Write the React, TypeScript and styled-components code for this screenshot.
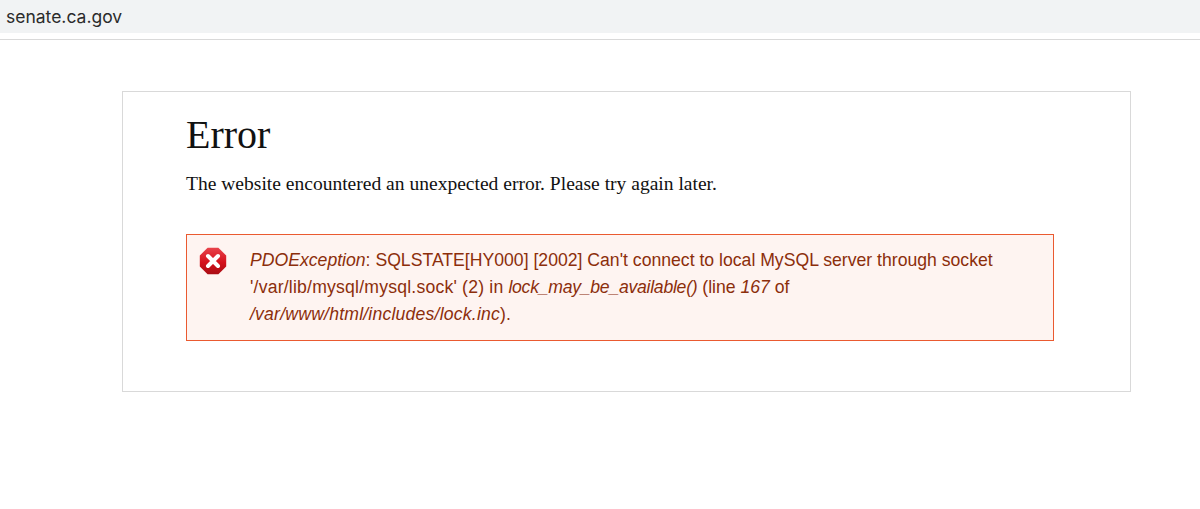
import styled, { createGlobalStyle } from 'styled-components';

const GlobalStyle = createGlobalStyle`
  html, body {
    margin: 0;
    padding: 0;
    background: #fff;
  }
`;

export default function App() {
  return (
    <>
      <GlobalStyle />
      <Page>
        <AddressBar>
          <AddressText>senate.ca.gov</AddressText>
        </AddressBar>
        <BarRule />
        <Main>
          <Card>
            <Title>Error</Title>
            <Lead>The website encountered an unexpected error. Please try again later.</Lead>
            <Alert>
              <AlertIcon viewBox="0 0 28 28" aria-hidden="true">
                <defs>
                  <linearGradient id="stopFill" x1="0" y1="0" x2="0" y2="1">
                    <stop offset="0" stopColor="#e8434b" />
                    <stop offset="0.55" stopColor="#d5111c" />
                    <stop offset="1" stopColor="#a90d14" />
                  </linearGradient>
                </defs>
                <path
                  d="M8.6 0.8h10.8l7.8 7.8v10.8l-7.8 7.8H8.6l-7.8-7.8V8.6z"
                  fill="url(#stopFill)"
                />
                <path
                  d="M9 9l10 10M19 9L9 19"
                  stroke="#fff"
                  strokeWidth="4"
                  strokeLinecap="round"
                  fill="none"
                />
              </AlertIcon>
              <AlertText>
                <em>PDOException</em>: SQLSTATE[HY000] [2002] Can't connect to local MySQL server through socket
                <br />
                <PathText>'/var/lib/mysql/mysql.sock' (2) in</PathText> <FunctionName>lock_may_be_available()</FunctionName> (line <em>167</em> of
                <br />
                <PathText as="em">/var/www/html/includes/lock.inc</PathText>).
              </AlertText>
            </Alert>
          </Card>
        </Main>
      </Page>
    </>
  );
}

const Page = styled.div`
  width: 1200px;
  height: 509px;
  overflow: hidden;
  background: #fff;
`;

const AddressBar = styled.div`
  height: 33px;
  background: #f1f3f4;
  display: flex;
  align-items: center;
  padding-left: 6px;
  box-sizing: border-box;
`;

const AddressText = styled.span`
  font-family: Inter, 'Liberation Sans', sans-serif;
  font-size: 17.5px;
  color: #2b2b2b;
`;

const BarRule = styled.div`
  margin-top: 6px;
  height: 1px;
  background: #d9d9d9;
`;

const Main = styled.main`
  padding: 51px 69px 0 122px;
`;

const Card = styled.section`
  box-sizing: border-box;
  height: 301px;
  border: 1px solid #d9d9d9;
  padding: 24px 76px 0 63px;
`;

const Title = styled.h1`
  margin: 0;
  font-family: 'Liberation Serif', serif;
  font-weight: 400;
  font-size: 40px;
  line-height: 38px;
  color: #111;
`;

const Lead = styled.p`
  margin: 17px 0 0;
  font-family: 'Liberation Serif', serif;
  font-size: 19.55px;
  line-height: 26px;
  color: #111;
`;

const Alert = styled.div`
  box-sizing: border-box;
  height: 107px;
  margin-top: 37px;
  display: flex;
  align-items: flex-start;
  padding: 12px 16px 0 12px;
  gap: 23px;
  background: #fef4f1;
  border: 1px solid #ea5a30;
`;

const AlertIcon = styled.svg`
  flex: none;
  width: 28px;
  height: 28px;
`;

const AlertText = styled.div`
  font-family: 'Liberation Sans', Arial, sans-serif;
  font-size: 17.64px;
  line-height: 27px;
  color: #8c2e0b;
`;

const PathText = styled.span`
  letter-spacing: 0.2px;
`;

const FunctionName = styled.em`
  letter-spacing: -0.26px;
`;
